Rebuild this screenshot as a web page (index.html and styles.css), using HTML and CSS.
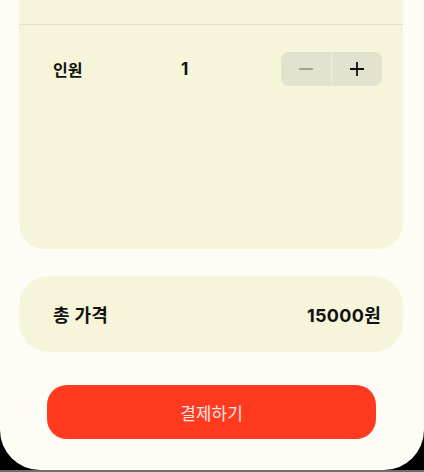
FILE: index.html
```html
<!DOCTYPE html>
<html lang="ko">
<head>
  <meta charset="UTF-8">
  <meta name="viewport" content="width=device-width, initial-scale=1.0">
  <title>결제</title>
  <link rel="stylesheet" href="styles.css">
</head>
<body>
  <div class="screen">
    <div class="card options">
      <div class="card-top"></div>
      <div class="row">
        <span class="label">인원</span>
        <span class="count">1</span>
        <div class="stepper">
          <button class="step minus" aria-label="빼기">
            <svg width="16" height="16" viewBox="0 0 16 16"><path d="M1 8h14" stroke="#8e8e8a" stroke-width="1.6" fill="none"/></svg>
          </button>
          <button class="step plus" aria-label="더하기">
            <svg width="16" height="16" viewBox="0 0 16 16"><path d="M1 8h14M8 1v14" stroke="#111" stroke-width="1.8" fill="none"/></svg>
          </button>
        </div>
      </div>
    </div>

    <div class="card total">
      <span>총 가격</span>
      <span>15000원</span>
    </div>

    <button class="pay">결제하기</button>
  </div>
  <div class="bottom-bar"></div>
</body>
</html>
```

FILE: styles.css
```css
html, body {
  margin: 0;
  padding: 0;
}
body {
  background: #000;
  font-family: 'Inter', 'Noto Sans CJK KR', sans-serif;
  color: #111;
  width: 424px;
  height: 472px;
  overflow: hidden;
}
.screen {
  height: 470px;
  background: #fdfdf6;
  border-radius: 0 0 40px 40px;
  padding: 0 21px 0 19px;
  box-sizing: border-box;
  display: flex;
  flex-direction: column;
}
.bottom-bar {
  height: 2px;
  background: #6e6e6e;
}
.card {
  background: #f6f5da;
}
.options {
  height: 249px;
  border-radius: 0 0 26px 26px;
  box-sizing: border-box;
}
.card-top {
  height: 24px;
  border-bottom: 1px solid #e0dfcc;
}
.row {
  display: flex;
  align-items: center;
  padding: 27px 21px 0 34px;
}
.label {
  width: 128px;
  font-size: 16px;
  font-weight: 700;
}
.count {
  font-size: 17px;
  font-weight: 700;
}
.stepper {
  margin-left: auto;
  display: flex;
  background: #e3e2cf;
  border-radius: 8px;
  height: 34px;
  width: 101px;
  overflow: hidden;
}
.step {
  flex: 1;
  border: none;
  background: none;
  padding: 0;
  display: flex;
  align-items: center;
  justify-content: center;
}
.minus {
  border-right: 1px solid #eeeddc;
}
.total {
  margin-top: 27px;
  height: 76px;
  border-radius: 30px;
  display: flex;
  align-items: center;
  justify-content: space-between;
  padding: 0 22px 0 34px;
  font-size: 18px;
  font-weight: 700;
  letter-spacing: 0.3px;
}
.pay {
  margin: 33px 27px 0 28px;
  height: 54px;
  border: none;
  border-radius: 20px;
  background: #ff3a1e;
  color: #fbe6e6;
  font-family: 'Inter', 'Noto Sans CJK KR', sans-serif;
  font-size: 17px;
}
```
